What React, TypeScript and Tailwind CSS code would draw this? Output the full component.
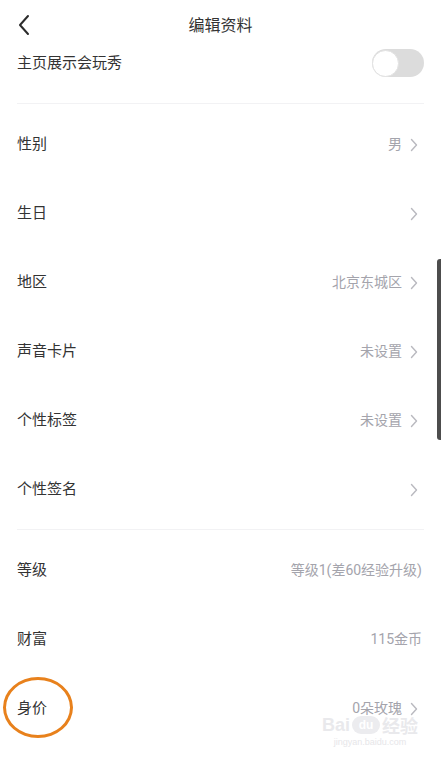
import React from "react";

const Chevron = () => (
  <svg width="8" height="14" viewBox="0 0 8 14" className="ml-[8px]">
    <path d="M1.5 1.5 L6.5 7 L1.5 12.5" fill="none" stroke="#b9b9bf" strokeWidth="1.4" strokeLinecap="round" strokeLinejoin="round" />
  </svg>
);

type RowProps = { label: string; value?: string; arrow?: boolean };

const Row = ({ label, value, arrow = true }: RowProps) => (
  <div className="h-[69px] flex items-center justify-between pl-[17px] pr-[23px]">
    <span className="text-[15px] text-[#333333]">{label}</span>
    <div className="flex items-center">
      {value && <span className="text-[14px] text-[#a4a4ac]">{value}</span>}
      {arrow && <Chevron />}
    </div>
  </div>
);

export default function App() {
  return (
    <div
      className="relative w-[441px] h-[760px] bg-white overflow-hidden"
      style={{ fontFamily: 'Roboto, "Noto Sans CJK SC", "Noto Sans", sans-serif' }}
    >
      {/* header */}
      <div className="relative h-[52px] flex items-center justify-center">
        <svg width="16" height="24" viewBox="0 0 16 24" className="absolute left-[16px] top-[13px]">
          <path d="M12 3 L4 12 L12 21" fill="none" stroke="#2b2b2b" strokeWidth="2" strokeLinecap="round" strokeLinejoin="round" />
        </svg>
        <span className="text-[16px] text-[#333333]">编辑资料</span>
      </div>

      {/* toggle row */}
      <div className="h-[22px] flex items-center justify-between pl-[17px] pr-[17px]">
        <span className="text-[15px] text-[#333333]">主页展示会玩秀</span>
        <div className="w-[52px] h-[28px] rounded-full bg-[#dcdcdc] flex items-center">
          <div className="w-[27px] h-[27px] rounded-full bg-white border border-[#e2e2e2]" />
        </div>
      </div>

      <div className="mt-[29px] mx-[17px] h-px bg-[#f2f2f4]" />

      <div className="mt-[6px]">
        <Row label="性别" value="男" />
        <Row label="生日" />
        <Row label="地区" value="北京东城区" />
        <Row label="声音卡片" value="未设置" />
        <Row label="个性标签" value="未设置" />
        <Row label="个性签名" />
      </div>

      <div className="mt-[5px] mx-[17px] h-px bg-[#f2f2f4]" />

      <div className="mt-[6px]">
        <div className="h-[69px] flex items-center justify-between pl-[17px] pr-[19px]">
          <span className="text-[15px] text-[#333333]">等级</span>
          <span className="text-[14px] text-[#a4a4ac]">等级1(差60经验升级)</span>
        </div>
        <div className="h-[69px] flex items-center justify-between pl-[17px] pr-[19px]">
          <span className="text-[15px] text-[#333333]">财富</span>
          <span className="text-[14px] text-[#a4a4ac]">115金币</span>
        </div>
        <Row label="身价" value="0朵玫瑰" />
      </div>

      {/* orange annotation ellipse */}
      <div className="absolute left-[3px] top-[677px] w-[70px] h-[61px] rounded-[50%] border-[3px] border-[#e8811c]" />

      {/* scrollbar */}
      <div className="absolute left-[437px] top-[259px] w-[5px] h-[181px] rounded-l-[3px] bg-[#4d4d4d]" />

      {/* watermark */}
      <div className="absolute left-[322px] top-[716px] flex flex-col items-center leading-none pointer-events-none">
        <div className="flex items-center text-[#e9e9ec] font-bold text-[18px]" style={{ fontFamily: '"Liberation Sans", sans-serif' }}>
          <span>Bai</span>
          <span className="mx-[2px] w-[28px] h-[18px] rounded-full bg-[#ececef] text-white text-[12px] flex items-center justify-center">du</span>
          <span style={{ fontFamily: '"Noto Sans CJK SC", sans-serif' }}>经验</span>
        </div>
        <span className="mt-[4px] text-[9px] text-[#e6e6e9]" style={{ fontFamily: '"Liberation Sans", sans-serif' }}>jingyan.baidu.com</span>
      </div>
    </div>
  );
}
